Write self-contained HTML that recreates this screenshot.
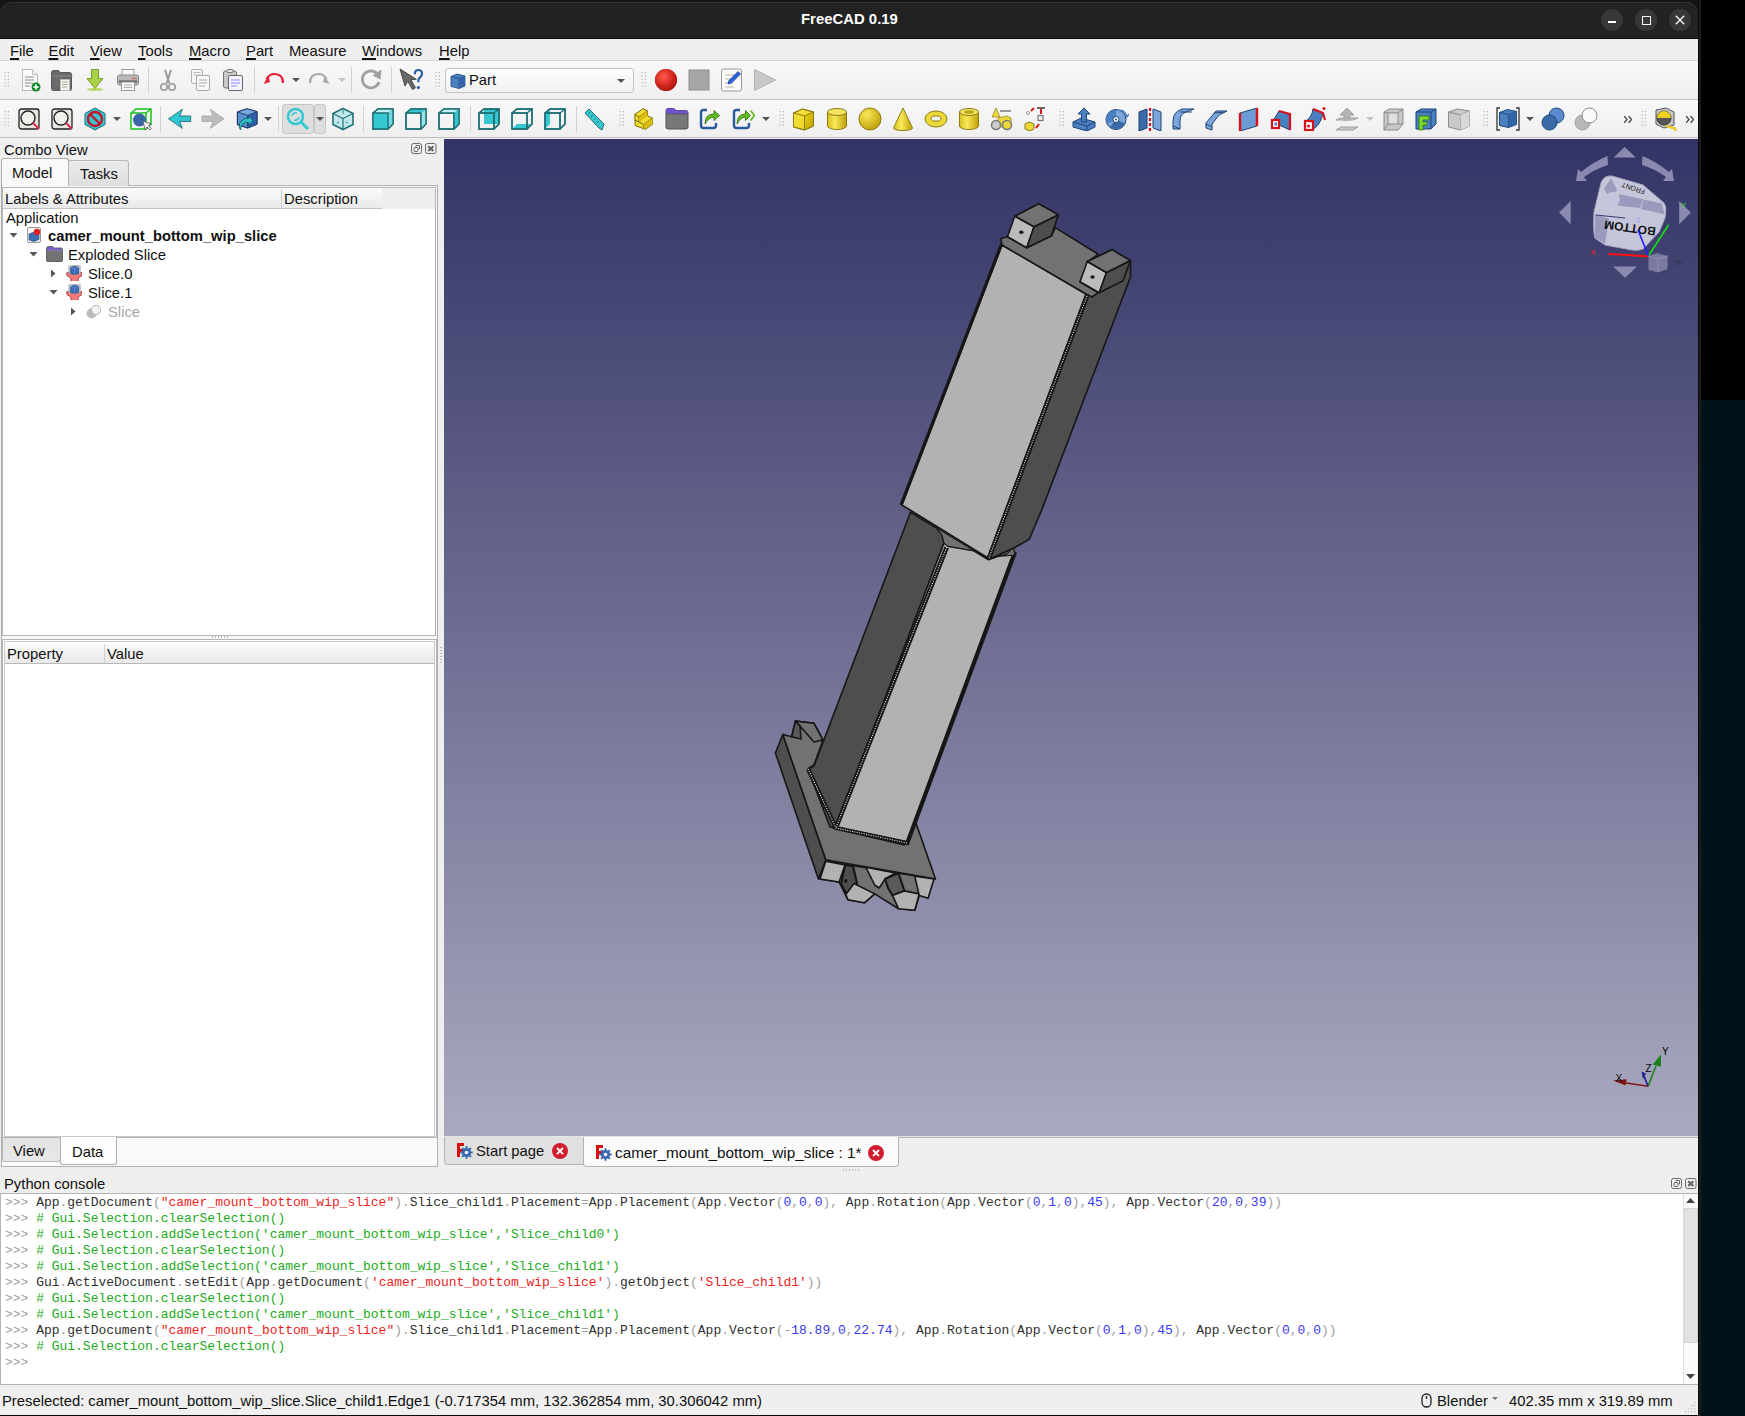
<!DOCTYPE html>
<html><head><meta charset="utf-8">
<style>
*{box-sizing:border-box;margin:0;padding:0}
html,body{width:1745px;height:1416px;overflow:hidden;background:#000;font-family:"Liberation Sans",sans-serif;color:#101010}
.a{position:absolute}
.t{position:absolute;white-space:pre;font-size:14.8px;line-height:18px}
#win{position:absolute;left:0;top:0;width:1698px;height:1416px;background:#efefef;overflow:hidden}
#rb{position:absolute;left:1698px;top:0;width:3px;height:1416px;background:#1c1c1a;border-left:1px solid #0a0a0a}
#rdark{position:absolute;left:1701px;top:400px;width:44px;height:1016px;background:#00131b}
#title{position:absolute;left:0;top:0;width:1698px;height:39px;background:#141414;border-bottom:1px solid #0c0c0c}
#title:before{content:"";position:absolute;left:0;top:2px;width:1698px;height:36px;background:#222;border-radius:12px 12px 0 0;box-shadow:inset 0 1px 0 #333}
.wbtn{position:absolute;top:9px;width:22px;height:22px;border-radius:11px;background:#373737}
#menu{position:absolute;left:0;top:39px;width:1698px;height:22px;background:#efefef;border-bottom:1px solid #d6d6d6}
.tb{position:absolute;left:0;width:1698px;background:linear-gradient(#f8f8f8,#efefef);border-bottom:1px solid #c2c2c2}
.sep{position:absolute;width:1px;height:26px;background:#d2d2d2}
.grip{position:absolute;width:6px;height:19px;background-image:radial-gradient(circle at 1.5px 1.5px,#bcbcbc .9px,transparent 1.1px);background-size:3px 4px}
.frame{position:absolute;border:1px solid #b4b4b4}
.hdr{position:absolute;background:linear-gradient(#fbfbfb,#e9e9e9);border-bottom:1px solid #c4c4c4}
.mono{position:absolute;left:5px;white-space:pre;font-family:"Liberation Mono",monospace;font-size:12.97px;line-height:16px;color:#303030}
.op{color:#a0a0a4}.st{color:#ee1c1c}.cm{color:#22aa22}.nu{color:#3838f0}
</style></head><body>
<svg width="0" height="0" style="position:absolute"><defs>
<radialGradient id="gRec" cx=".4" cy=".35" r=".65"><stop offset="0" stop-color="#ff5a50"/><stop offset=".6" stop-color="#d82a20"/><stop offset="1" stop-color="#a81810"/></radialGradient>
<linearGradient id="gYh" x1="0" x2="1"><stop offset="0" stop-color="#d8c020"/><stop offset=".4" stop-color="#f8e858"/><stop offset="1" stop-color="#c0a008"/></linearGradient>
<radialGradient id="gYs" cx=".35" cy=".3" r=".75"><stop offset="0" stop-color="#f8e858"/><stop offset="1" stop-color="#c0a008"/></radialGradient>
<linearGradient id="gYf" x1="0" y1="0" x2="1" y2="1"><stop offset="0" stop-color="#f8e440"/><stop offset="1" stop-color="#e8d020"/></linearGradient>
<linearGradient id="gYr" x1="0" y1="0" x2="1" y2="1"><stop offset="0" stop-color="#f0d810"/><stop offset="1" stop-color="#b89a00"/></linearGradient>
</defs></svg>
<div id="win">
 <div id="title">
  <div class="t" style="left:801px;top:10px;font-weight:bold;color:#fff;font-size:14.9px">FreeCAD 0.19</div>
  <div class="wbtn" style="left:1601px"><div class="a" style="left:7px;top:12px;width:8px;height:1.6px;background:#fff"></div></div>
  <div class="wbtn" style="left:1635px"><div class="a" style="left:7px;top:7px;width:8.5px;height:8.5px;border:1.4px solid #fff"></div></div>
  <div class="wbtn" style="left:1669px"><svg class="a" style="left:0;top:0" width="22" height="22"><path d="M6.8 6.8L15.2 15.2M15.2 6.8L6.8 15.2" stroke="#fff" stroke-width="1.3"/></svg></div>
 </div>
 <div id="menu">
  <div class="t" style="left:10px;top:3px"><u style="text-decoration-thickness:2px;text-underline-offset:2px">F</u>ile</div>
  <div class="t" style="left:48.5px;top:3px"><u style="text-decoration-thickness:2px;text-underline-offset:2px">E</u>dit</div>
  <div class="t" style="left:90px;top:3px"><u style="text-decoration-thickness:2px;text-underline-offset:2px">V</u>iew</div>
  <div class="t" style="left:138px;top:3px"><u style="text-decoration-thickness:2px;text-underline-offset:2px">T</u>ools</div>
  <div class="t" style="left:189px;top:3px"><u style="text-decoration-thickness:2px;text-underline-offset:2px">M</u>acro</div>
  <div class="t" style="left:246px;top:3px"><u style="text-decoration-thickness:2px;text-underline-offset:2px">P</u>art</div>
  <div class="t" style="left:289px;top:3px">Measure</div>
  <div class="t" style="left:362px;top:3px"><u style="text-decoration-thickness:2px;text-underline-offset:2px">W</u>indows</div>
  <div class="t" style="left:439px;top:3px"><u style="text-decoration-thickness:2px;text-underline-offset:2px">H</u>elp</div>
 </div>
 <div class="tb" id="tb1" style="top:61px;height:39px"></div>
 <div class="tb" id="tb2" style="top:100px;height:38px"></div>
<svg class="a" style="left:4px;top:70px" width="6" height="19" fill="#b4b4b4"><rect x="0.5" y="2.0" width="1.2" height="1.2"/><rect x="3.8" y="2.0" width="1.2" height="1.2"/><rect x="0.5" y="5.4" width="1.2" height="1.2"/><rect x="3.8" y="5.4" width="1.2" height="1.2"/><rect x="0.5" y="8.8" width="1.2" height="1.2"/><rect x="3.8" y="8.8" width="1.2" height="1.2"/><rect x="0.5" y="12.2" width="1.2" height="1.2"/><rect x="3.8" y="12.2" width="1.2" height="1.2"/><rect x="0.5" y="15.6" width="1.2" height="1.2"/><rect x="3.8" y="15.6" width="1.2" height="1.2"/></svg>
<svg class="a" style="left:18px;top:68px" width="24" height="24" viewBox="0 0 24 24"><path d="M4.5 1.5h10l5 5v16h-15z" fill="#fafafa" stroke="#b8b8b8"/><path d="M14.5 1.5v5h5" fill="#eee" stroke="#c0c0c0"/>
<path d="M7 9h9M7 12h9M7 15h8M7 18h5" stroke="#888" stroke-width="1"/>
<circle cx="18" cy="19" r="4.5" fill="#0d8a25"/><path d="M18 16.3v5.4M15.3 19h5.4" stroke="#fff" stroke-width="1.6"/></svg>
<svg class="a" style="left:50px;top:68px" width="24" height="24" viewBox="0 0 24 24"><path d="M1.5 4.5q0-2 2-2h5l2 2h9q2 0 2 2v14q0 2-2 2h-16q-2 0-2-2z" fill="#6a6a6a" stroke="#555"/><path d="M1.5 8h21" stroke="#888"/>
<path d="M10.5 11.5h9v11h-9z" fill="#f4f4f2" stroke="#bbb"/><path d="M12 14h6M12 16.5h6M12 19h5" stroke="#b0a890"/></svg>
<svg class="a" style="left:83px;top:68px" width="24" height="24" viewBox="0 0 24 24"><ellipse cx="12" cy="21.5" rx="8" ry="1.6" fill="#b8dc70"/><path d="M8.5 1.5h7v9h4.5l-8 10-8-10h4.5z" fill="#a8d048" stroke="#7a9a30"/></svg>
<svg class="a" style="left:116px;top:68px" width="24" height="24" viewBox="0 0 24 24"><rect x="6" y="1.5" width="12" height="6" fill="#fafafa" stroke="#999"/><rect x="1.5" y="7" width="21" height="10" rx="2" fill="#b8b8b8" stroke="#8a8a8a"/>
<rect x="3" y="12.5" width="18" height="2" fill="#555"/><rect x="5.5" y="14" width="13" height="8.5" fill="#fafafa" stroke="#999"/><path d="M8 17h8M8 19.5h8" stroke="#aaa"/>
<circle cx="16.5" cy="10.5" r=".7" fill="#e33"/><circle cx="18.3" cy="10.5" r=".7" fill="#e33"/><circle cx="20" cy="10.5" r=".7" fill="#3a3"/></svg>
<svg class="a" style="left:156px;top:68px" width="24" height="24" viewBox="0 0 24 24"><path d="M9 2l4.5 13.5M15 2l-4.5 13.5" stroke="#9a9a9a" stroke-width="2"/><circle cx="8" cy="19" r="3.2" fill="none" stroke="#9a9a9a" stroke-width="1.6"/><circle cx="16" cy="19" r="3.2" fill="none" stroke="#9a9a9a" stroke-width="1.6"/></svg>
<svg class="a" style="left:189px;top:68px" width="24" height="24" viewBox="0 0 24 24"><rect x="2.5" y="1.5" width="11" height="14" rx="1.5" fill="#f6f6f6" stroke="#b0b0b0"/><path d="M4.5 4.5h7M4.5 7h7" stroke="#bbb"/>
<rect x="7.5" y="7.5" width="13" height="15" rx="1.5" fill="#f8f8f8" stroke="#a8a8a8"/><path d="M10 12h8M10 15h8M10 18h6" stroke="#aaa"/></svg>
<svg class="a" style="left:222px;top:68px" width="24" height="24" viewBox="0 0 24 24"><rect x="1.5" y="3" width="13" height="17" rx="2" fill="#c8c8c8" stroke="#707070"/><rect x="5" y="1.5" width="6" height="3" rx="1" fill="#e8e8e8" stroke="#777"/>
<rect x="6.5" y="7.5" width="14" height="15" rx="1.5" fill="#f4f4ff" stroke="#666"/><path d="M9 12h9M9 15h9M9 18h6" stroke="#8888ff" stroke-width="1.2"/></svg>
<svg class="a" style="left:262px;top:68px" width="24" height="24" viewBox="0 0 24 24"><path d="M21 15q0-9-8.5-9q-5.5 0-8 5" fill="none" stroke="#ee1c3a" stroke-width="2.2"/><path d="M1.5 16l5-8 1.5 6z" fill="#ee1c3a"/></svg>
<svg class="a" style="left:306.7px;top:68px" width="24" height="24" viewBox="0 0 24 24"><path d="M3 15q0-9 8.5-9q5.5 0 8 5" fill="none" stroke="#a8a8a8" stroke-width="2.2"/><path d="M22.5 16l-5-8-1.5 6z" fill="#a8a8a8"/></svg>
<svg class="a" style="left:359px;top:68px" width="24" height="24" viewBox="0 0 24 24"><path d="M18.5 6a8.5 8.5 0 1 0 1.5 8" fill="none" stroke="#a0a0a0" stroke-width="2.8"/><path d="M22.5 1.5l-1 10-8-4z" fill="#a0a0a0"/></svg>
<svg class="a" style="left:399px;top:68px" width="24" height="24" viewBox="0 0 24 24"><path d="M1 1l5 17 2.8-4.8 4.7 8.3 3-1.7-4.7-8.3 5.5-.2z" fill="#6a6a6a" stroke="#3c3c3c" stroke-width=".9" stroke-linejoin="round"/><path d="M15.8 6.2q0-4.2 3.6-4.2t3.6 3.8q0 2.4-2.6 4.2-1 .7-1 2.6v1.6" fill="none" stroke="#2a5aa6" stroke-width="2.2"/><circle cx="19.4" cy="19.5" r="1.6" fill="#2a5aa6"/></svg>
<svg class="a" style="left:292px;top:78px" width="8" height="4"><path d="M0 0h8l-4 4z" fill="#555"/></svg>
<svg class="a" style="left:337.5px;top:78px" width="8" height="4"><path d="M0 0h8l-4 4z" fill="#c4c4c4"/></svg>
<div class="sep" style="left:148px;top:67px"></div>
<div class="sep" style="left:254px;top:67px"></div>
<div class="sep" style="left:351px;top:67px"></div>
<div class="sep" style="left:391px;top:67px"></div>
<svg class="a" style="left:435px;top:70px" width="6" height="19" fill="#b4b4b4"><rect x="0.5" y="2.0" width="1.2" height="1.2"/><rect x="3.8" y="2.0" width="1.2" height="1.2"/><rect x="0.5" y="5.4" width="1.2" height="1.2"/><rect x="3.8" y="5.4" width="1.2" height="1.2"/><rect x="0.5" y="8.8" width="1.2" height="1.2"/><rect x="3.8" y="8.8" width="1.2" height="1.2"/><rect x="0.5" y="12.2" width="1.2" height="1.2"/><rect x="3.8" y="12.2" width="1.2" height="1.2"/><rect x="0.5" y="15.6" width="1.2" height="1.2"/><rect x="3.8" y="15.6" width="1.2" height="1.2"/></svg>
<svg class="a" style="left:641px;top:70px" width="6" height="19" fill="#b4b4b4"><rect x="0.5" y="2.0" width="1.2" height="1.2"/><rect x="3.8" y="2.0" width="1.2" height="1.2"/><rect x="0.5" y="5.4" width="1.2" height="1.2"/><rect x="3.8" y="5.4" width="1.2" height="1.2"/><rect x="0.5" y="8.8" width="1.2" height="1.2"/><rect x="3.8" y="8.8" width="1.2" height="1.2"/><rect x="0.5" y="12.2" width="1.2" height="1.2"/><rect x="3.8" y="12.2" width="1.2" height="1.2"/><rect x="0.5" y="15.6" width="1.2" height="1.2"/><rect x="3.8" y="15.6" width="1.2" height="1.2"/></svg>
<svg class="a" style="left:654px;top:68px" width="24" height="24" viewBox="0 0 24 24"><circle cx="12" cy="12" r="11" fill="#d8262b"/><circle cx="12" cy="12" r="11" fill="url(#gRec)"/></svg>
<svg class="a" style="left:687px;top:68px" width="24" height="24" viewBox="0 0 24 24"><rect x="2" y="2" width="20" height="20" fill="#a6a6a6" stroke="#8c8c8c"/></svg>
<svg class="a" style="left:720px;top:68px" width="24" height="24" viewBox="0 0 24 24"><rect x="1.5" y="1" width="20" height="22" rx="2" fill="#fafafa" stroke="#9a9a9a"/><path d="M5 7h9M5 11h6M5 15h7M5 19h9" stroke="#c0b8a0"/><path d="M18 3.5l2.5 2.5-9 9-3.5 1 1-3.5z" fill="#2a64d8" stroke="#1a3f90" stroke-width=".8"/></svg>
<svg class="a" style="left:753px;top:68px" width="24" height="24" viewBox="0 0 24 24"><path d="M1.5 1.5l21 10.5-21 10.5z" fill="#c8c8c8" stroke="#b0b0b0"/></svg>
<div class="a" style="left:444.5px;top:68px;width:189px;height:25px;border:1px solid #c4c4c4;border-radius:3px;background:linear-gradient(#fdfdfd,#f0f0f0)"></div>
<svg class="a" style="left:450px;top:73px" width="16" height="16" viewBox="0 0 16 16"><path d="M1 3.5l6-2.5 8 2v10l-6 2.5-8-2z" fill="#4a7fc0" stroke="#24497e" stroke-width=".8"/><path d="M1 3.5l8 2 6-2.5M9 5.5v10" fill="none" stroke="#24497e" stroke-width=".8"/><path d="M9 5.5l6-2.5v10l-6 2.5z" fill="#3264a6"/></svg>
<div class="t" style="left:469px;top:71px">Part</div><svg class="a" style="left:617px;top:79px" width="8" height="4"><path d="M0 0h8l-4 4z" fill="#555"/></svg>
<svg class="a" style="left:4px;top:109px" width="6" height="19" fill="#b4b4b4"><rect x="0.5" y="2.0" width="1.2" height="1.2"/><rect x="3.8" y="2.0" width="1.2" height="1.2"/><rect x="0.5" y="5.4" width="1.2" height="1.2"/><rect x="3.8" y="5.4" width="1.2" height="1.2"/><rect x="0.5" y="8.8" width="1.2" height="1.2"/><rect x="3.8" y="8.8" width="1.2" height="1.2"/><rect x="0.5" y="12.2" width="1.2" height="1.2"/><rect x="3.8" y="12.2" width="1.2" height="1.2"/><rect x="0.5" y="15.6" width="1.2" height="1.2"/><rect x="3.8" y="15.6" width="1.2" height="1.2"/></svg>
<svg class="a" style="left:83px;top:107px" width="24" height="24" viewBox="0 0 24 24"><path d="M12 1l10 5.5v11L12 23 2 17.5v-11z" fill="#35c8d0" stroke="#1e6f74"/><circle cx="12" cy="12" r="7" fill="none" stroke="#c8102a" stroke-width="2.4"/><path d="M7 7l10 10" stroke="#c8102a" stroke-width="2.4"/></svg>
<svg class="a" style="left:128.6px;top:107px" width="24" height="24" viewBox="0 0 24 24"><path d="M2 6l5-4h15v15l-5 5H2z" fill="none" stroke="#18c018" stroke-width="1.5"/><path d="M2 6h15v16M17 6l5-4" stroke="#18c018" stroke-width="1.5" fill="none"/><circle cx="10.5" cy="13" r="6.5" fill="#3a64a8"/><path d="M14 14l2 9 2-3 3 3 1.5-1.5-3-3 3-1.5z" fill="#eee" stroke="#555" stroke-width=".8"/></svg>
<svg class="a" style="left:168.3px;top:107px" width="24" height="24" viewBox="0 0 24 24"><path d="M0.6 11.8L14.4 2.2 11.7 9H22.7V14.5H11.7L14.4 21.4Z" fill="#32c6d0" stroke="#14626a" stroke-width=".8" stroke-linejoin="round"/></svg>
<svg class="a" style="left:201px;top:107px" width="24" height="24" viewBox="0 0 24 24"><path d="M23 11.8L9.2 2.2 12 9H1V14.5H12L9.2 21.4Z" fill="#bcbcbc" stroke="#a4a4a4" stroke-width=".8" stroke-linejoin="round"/></svg>
<svg class="a" style="left:234px;top:107px" width="24" height="24" viewBox="0 0 24 24"><path d="M3.4 5l9.6-3.2 10 2.8v12.6l-9.4 3.8-10.2-3.4z" fill="#5a8fd0" stroke="#1e3a6a"/><path d="M13.6 8.4l9.4-3.8v12.6l-9.4 3.8z" fill="#2f5fa8"/><path d="M3.4 5l9.6-3.2 10 2.8-9.4 3.8z" fill="#7aa8e0"/><path d="M3.4 5l10.2 3.4 9.4-3.8M13.6 8.4v12.2" fill="none" stroke="#1e3a6a" stroke-width=".9"/><path d="M3.4 5l9.6-3.2 10 2.8v12.6l-9.4 3.8-10.2-3.4z" fill="none" stroke="#1e3a6a" stroke-width="1"/><path d="M6.5 23q-3-5 1-9t7-2.5V9l4.5 4.5-4.5 4.5v-2.5q-3-1-5.5 1.5t-2.5 6z" fill="#30c0c8" stroke="#0a5a60" stroke-width=".8"/></svg>
<svg class="a" style="left:331px;top:107px" width="24" height="24" viewBox="0 0 24 24"><path d="M12 1.5l10 5v11l-10 5-10-5v-11z" fill="none" stroke="#1e6f74" stroke-width="1.6"/><path d="M2 6.5l10 5 10-5M12 11.5v11" fill="none" stroke="#1e6f74" stroke-width="1.3"/><path d="M12 3v4M6 16l2-1M17 16l-2-1" stroke="#1e6f74"/>
<path d="M3 7l9 4.5 9-4.5-9-4.5z" fill="#35c8d0" opacity=".25"/><path d="M3 7.5l8.5 4.5v10L3 17.5z" fill="#35c8d0" opacity=".25"/><path d="M21 7.5l-8.5 4.5v10l8.5-4.5z" fill="#35c8d0" opacity=".25"/></svg>
<svg class="a" style="left:371.3px;top:107px" width="24" height="24" viewBox="0 0 24 24"><path d="M2 6l5-4h15v15l-5 5H2z" fill="#fff" fill-opacity="0" stroke="#1e6f74" stroke-width="1.4"/>
<path d="M2 6h15v16" fill="none" stroke="#1e6f74" stroke-width="1.4"/><path d="M17 6l5-4" stroke="#1e6f74" stroke-width="1.4"/>
<path d="M2 6h15v16H2z" fill="#35c8d0"/><path d="M2 6l5-4h15l-5 4z" fill="#bff0f2"/><path d="M17 6l5-4v15l-5 5z" fill="#6ad8de"/>
<path d="M2 6h15v16H2zM2 6l5-4h15v15l-5 5" fill="none" stroke="#1e6f74" stroke-width="1.4"/></svg>
<svg class="a" style="left:404px;top:107px" width="24" height="24" viewBox="0 0 24 24"><path d="M2 6l5-4h15v15l-5 5H2z" fill="#fff" fill-opacity="0" stroke="#1e6f74" stroke-width="1.4"/>
<path d="M2 6h15v16" fill="none" stroke="#1e6f74" stroke-width="1.4"/><path d="M17 6l5-4" stroke="#1e6f74" stroke-width="1.4"/>
<path d="M2 6h15v16H2z" fill="none"/><path d="M2 6l5-4h15l-5 4z" fill="#35c8d0"/><path d="M17 6l5-4v15l-5 5z" fill="#9ae4e8"/>
<path d="M2 6h15v16H2zM2 6l5-4h15v15l-5 5" fill="none" stroke="#1e6f74" stroke-width="1.4"/></svg>
<svg class="a" style="left:436.5px;top:107px" width="24" height="24" viewBox="0 0 24 24"><path d="M2 6l5-4h15v15l-5 5H2z" fill="#fff" fill-opacity="0" stroke="#1e6f74" stroke-width="1.4"/>
<path d="M2 6h15v16" fill="none" stroke="#1e6f74" stroke-width="1.4"/><path d="M17 6l5-4" stroke="#1e6f74" stroke-width="1.4"/>
<path d="M2 6h15v16H2z" fill="none"/><path d="M2 6l5-4h15l-5 4z" fill="#bff0f2"/><path d="M17 6l5-4v15l-5 5z" fill="#35c8d0"/>
<path d="M2 6h15v16H2zM2 6l5-4h15v15l-5 5" fill="none" stroke="#1e6f74" stroke-width="1.4"/></svg>
<svg class="a" style="left:477px;top:107px" width="24" height="24" viewBox="0 0 24 24"><path d="M7 2h15v15H7z" fill="#35c8d0"/><path d="M2 6l5-4h15v15l-5 5H2z" fill="#fff" fill-opacity="0" stroke="#1e6f74" stroke-width="1.4"/>
<path d="M2 6h15v16" fill="none" stroke="#1e6f74" stroke-width="1.4"/><path d="M17 6l5-4" stroke="#1e6f74" stroke-width="1.4"/>
<path d="M2 6h15v16H2z" fill="none"/><path d="M2 6l5-4h15l-5 4z" fill="none"/><path d="M17 6l5-4v15l-5 5z" fill="none"/>
<path d="M2 6h15v16H2zM2 6l5-4h15v15l-5 5" fill="none" stroke="#1e6f74" stroke-width="1.4"/></svg>
<svg class="a" style="left:510px;top:107px" width="24" height="24" viewBox="0 0 24 24"><path d="M2 22l5-5h15l-5 5z" fill="#35c8d0"/><path d="M2 6l5-4h15v15l-5 5H2z" fill="#fff" fill-opacity="0" stroke="#1e6f74" stroke-width="1.4"/>
<path d="M2 6h15v16" fill="none" stroke="#1e6f74" stroke-width="1.4"/><path d="M17 6l5-4" stroke="#1e6f74" stroke-width="1.4"/>
<path d="M2 6h15v16H2z" fill="none"/><path d="M2 6l5-4h15l-5 4z" fill="none"/><path d="M17 6l5-4v15l-5 5z" fill="none"/>
<path d="M2 6h15v16H2zM2 6l5-4h15v15l-5 5" fill="none" stroke="#1e6f74" stroke-width="1.4"/></svg>
<svg class="a" style="left:542.7px;top:107px" width="24" height="24" viewBox="0 0 24 24"><path d="M2 6l5-4v15l-5 5z" fill="#35c8d0"/><path d="M2 6l5-4h15v15l-5 5H2z" fill="#fff" fill-opacity="0" stroke="#1e6f74" stroke-width="1.4"/>
<path d="M2 6h15v16" fill="none" stroke="#1e6f74" stroke-width="1.4"/><path d="M17 6l5-4" stroke="#1e6f74" stroke-width="1.4"/>
<path d="M2 6h15v16H2z" fill="none"/><path d="M2 6l5-4h15l-5 4z" fill="none"/><path d="M17 6l5-4v15l-5 5z" fill="none"/>
<path d="M2 6h15v16H2zM2 6l5-4h15v15l-5 5" fill="none" stroke="#1e6f74" stroke-width="1.4"/></svg>
<svg class="a" style="left:582px;top:107px" width="24" height="24" viewBox="0 0 24 24"><path d="M3 6l4-4 15 15-2 6-3-2z" fill="#35c8d0" stroke="#1e6f74"/><path d="M8 5l-1.5 1.5M11 8l-2 2M14 11l-1.5 1.5M17 14l-2 2" stroke="#1e6f74"/></svg>
<svg class="a" style="left:632px;top:107px" width="24" height="24" viewBox="0 0 24 24"><path d="M2.8 7.4L11 1.5 15.5 4v4.9l4.9 2.3.3 5.9-7.4 5.2-10.1-3.7z" fill="#f0dc30" stroke="#6a5a00" stroke-width=".9" stroke-linejoin="round"/><path d="M2.8 7.4L7 10l8.5-6M7 10v5M3.2 13l3.8 2 4.5 2.5 8.9-6.3M11.5 17.5v4.8" fill="none" stroke="#6a5a00" stroke-width=".9"/><path d="M7 10l8.5-6v4.9L7 15z" fill="#d8bc10"/><path d="M11.5 17.5l8.9-6.3.3 5.9-9.2 5.2z" fill="#d8bc10"/></svg>
<svg class="a" style="left:664.5px;top:107px" width="24" height="24" viewBox="0 0 24 24"><path d="M1 3.5q0-2 2-2h6l2 2h10q2 0 2 2v14.5q0 2-2 2H3q-2 0-2-2z" fill="#787878" stroke="#505050"/><path d="M1 3.5q0-2 2-2h6l2 2h10q2 0 2 2v1.5H1z" fill="#7050d0"/><path d="M1 7h22" stroke="#5a5a5a"/></svg>
<svg class="a" style="left:698px;top:107px" width="24" height="24" viewBox="0 0 24 24"><path d="M9 3H5.5Q3 3 3 5.5v13Q3 21 5.5 21h10q2.5 0 2.5-2.5V16" fill="none" stroke="#2a5a9a" stroke-width="2.4"/><path d="M7 17q0-10 9-10V3.5l5.5 5-5.5 5V10q-5 0-9 7z" fill="#60c020" stroke="#2a6a10" stroke-width=".8"/></svg>
<svg class="a" style="left:731px;top:107px" width="24" height="24" viewBox="0 0 24 24"><path d="M9 3H5.5Q3 3 3 5.5v13Q3 21 5.5 21h10q2.5 0 2.5-2.5V16" fill="none" stroke="#2a5a9a" stroke-width="2.4"/><path d="M6 17q0-10 8.5-10V3.5l5 5-5 5V10q-4.5 0-8.5 7z" fill="#60c020" stroke="#2a6a10" stroke-width=".8"/><path d="M19.5 3.5l4 5-4 5" fill="none" stroke="#60c020" stroke-width="1.8"/></svg>
<svg class="a" style="left:791.7px;top:107px" width="24" height="24" viewBox="0 0 24 24"><path d="M1.5 6l9-4 11 3v14l-9 4-11-3z" fill="url(#gYf)" stroke="#8c7c12"/><path d="M12.5 9l9-4v14l-9 4z" fill="url(#gYr)"/><path d="M1.5 6l11 3 9-4M12.5 9v14" fill="none" stroke="#8c7c12"/><path d="M1.5 6l9-4 11 3v14l-9 4-11-3z" fill="none" stroke="#8c7c12"/></svg>
<svg class="a" style="left:824.5px;top:107px" width="24" height="24" viewBox="0 0 24 24"><path d="M2.5 5v14a9.5 3.5 0 0 0 19 0V5" fill="url(#gYh)" stroke="#8c7c12"/><ellipse cx="12" cy="5" rx="9.5" ry="3.5" fill="#f4e460" stroke="#8c7c12"/></svg>
<svg class="a" style="left:858px;top:107px" width="24" height="24" viewBox="0 0 24 24"><circle cx="12" cy="12" r="11" fill="url(#gYs)" stroke="#8c7c12"/></svg>
<svg class="a" style="left:890.7px;top:107px" width="24" height="24" viewBox="0 0 24 24"><path d="M12 1l9.5 20a9.5 2.5 0 0 1-19 0z" fill="url(#gYh)" stroke="#8c7c12"/></svg>
<svg class="a" style="left:924px;top:107px" width="24" height="24" viewBox="0 0 24 24"><ellipse cx="12" cy="12" rx="11" ry="8" fill="#ecd83a" stroke="#8c7c12"/><ellipse cx="12" cy="11.5" rx="5" ry="2.6" fill="#f4f4f4" stroke="#8c7c12"/></svg>
<svg class="a" style="left:956.5px;top:107px" width="24" height="24" viewBox="0 0 24 24"><path d="M2.5 5v14a9.5 3.5 0 0 0 19 0V5" fill="url(#gYh)" stroke="#8c7c12"/><ellipse cx="12" cy="5" rx="9.5" ry="3.5" fill="#f4e460" stroke="#8c7c12"/><ellipse cx="12" cy="5" rx="5" ry="1.8" fill="#b8a418"/></svg>
<svg class="a" style="left:989.7px;top:107px" width="24" height="24" viewBox="0 0 24 24"><path d="M6 1l4 9H2z" fill="#ecd83a" stroke="#8c7c12" stroke-width=".7"/><path d="M10 4h11" stroke="#999" stroke-width="2"/><path d="M8 11l9-2 4 2v9H8z" fill="#ecd83a" stroke="#8c7c12" stroke-width=".7"/><circle cx="6" cy="18" r="4.5" fill="#ccc" stroke="#777" stroke-width="1.5"/><circle cx="17" cy="18" r="4.5" fill="#ecd83a" stroke="#777" stroke-width="1.5"/></svg>
<svg class="a" style="left:1023px;top:107px" width="24" height="24" viewBox="0 0 24 24"><path d="M2 17l4-2 5 2v5l-4 2-5-2z" fill="#ecd83a" stroke="#8c7c12"/><path d="M3 6l2-2 2 2-2 2z" fill="#ddd" stroke="#888" stroke-width=".7"/><path d="M8 4l3-3" stroke="#d81818" stroke-width="2"/><path d="M14 1h8" stroke="#666" stroke-width="2"/><path d="M18 2v5" stroke="#d81818" stroke-width="2"/><rect x="15" y="8.5" width="5" height="5" fill="#eee" stroke="#777" stroke-width="1.2"/><path d="M16 17l-3 4" stroke="#d81818" stroke-width="2"/></svg>
<svg class="a" style="left:1071.5px;top:107px" width="24" height="24" viewBox="0 0 24 24"><path d="M1 15l8-4 14 4v5l-8 4-14-4z" fill="#4a7fc0" stroke="#1e4478"/><path d="M1 15l14 4 8-4M15 19v5" fill="none" stroke="#1e4478"/><path d="M12 1l6 6h-3.5v8h-5V7H6z" fill="#4a7fc0" stroke="#1e4478"/></svg>
<svg class="a" style="left:1105px;top:107px" width="24" height="24" viewBox="0 0 24 24"><circle cx="11" cy="12.5" r="10" fill="#7aa6dc" stroke="#1e4478"/><path d="M11 12.5V2.5A10 10 0 0 0 2 17z" fill="#4a7fc0"/><path d="M11 12.5l9 4A10 10 0 0 1 5 20z" fill="#3a6aa8"/><circle cx="11" cy="12.5" r="3" fill="#fff" stroke="#1e4478"/><circle cx="11" cy="12.5" r="1" fill="#1e4478"/><path d="M16 3q5 2 6 7l2-3" fill="none" stroke="#4a7fc0" stroke-width="1.4"/></svg>
<svg class="a" style="left:1138px;top:107px" width="24" height="24" viewBox="0 0 24 24"><path d="M1 5l8-3v19l-8 3z" fill="#3a6aa8" stroke="#1e4478"/><path d="M23 5l-8-3v19l8 3z" fill="#7aa6dc" stroke="#1e4478"/><path d="M12 1v23" stroke="#d8101a" stroke-width="2.2" stroke-dasharray="3 2"/></svg>
<svg class="a" style="left:1170.5px;top:107px" width="24" height="24" viewBox="0 0 24 24"><path d="M2 22V14q0-9 9-12h12l-8 3q-6 2-6 9v8z" fill="#7aa6dc" stroke="#1e4478"/><path d="M2 19l7 3" stroke="#1e4478"/><path d="M9 5h12" stroke="#1e4478"/></svg>
<svg class="a" style="left:1203.7px;top:107px" width="24" height="24" viewBox="0 0 24 24"><path d="M2 21v-5l10-12h11l-8 4-7 9v6z" fill="#7aa6dc" stroke="#1e4478"/><path d="M2 17l6 3M10 6l11-1" stroke="#1e4478"/></svg>
<svg class="a" style="left:1237px;top:107px" width="24" height="24" viewBox="0 0 24 24"><path d="M3 6l17-5v18l-17 5z" fill="#6c9ad4" stroke="#1e4478"/><path d="M3 6v18M20 1v18" stroke="#d8101a" stroke-width="2.4"/></svg>
<svg class="a" style="left:1269.7px;top:107px" width="24" height="24" viewBox="0 0 24 24"><path d="M3 14l6-10 11 3v16l-11-5z" fill="#4a7fc0" stroke="#1e4478"/><path d="M9 4l11 3v16" fill="none" stroke="#d8101a" stroke-width="2.2"/><rect x="2" y="13" width="7" height="8" fill="#fff" stroke="#d8101a" stroke-width="2.2"/><rect x="4.5" y="15.5" width="2.5" height="3" fill="#4a7fc0"/></svg>
<svg class="a" style="left:1302.5px;top:107px" width="24" height="24" viewBox="0 0 24 24"><path d="M3 14q6-4 7-12l10 4q-2 10-8 15l-9 3z" fill="#4a7fc0" stroke="#1e4478"/><path d="M10 2l10 4 2 7" fill="none" stroke="#d8101a" stroke-width="2.2"/><rect x="2" y="14" width="8" height="9" fill="#fff" stroke="#d8101a" stroke-width="2.2"/><circle cx="5.5" cy="19" r="1.5" fill="#d8101a"/><circle cx="21" cy="1.5" r="1.5" fill="#d8101a"/></svg>
<svg class="a" style="left:1335.4px;top:107px" width="24" height="24" viewBox="0 0 24 24"><path d="M12 1l7 7h-4v5H9V8H5z" fill="#b4b4b4" stroke="#909090" stroke-width=".8"/><path d="M1 13l5-2h17l-5 2z" fill="#c4c4c4" stroke="#a0a0a0"/><path d="M1 23l5-3h17l-5 3z" fill="#c4c4c4" stroke="#a0a0a0"/></svg>
<svg class="a" style="left:1381px;top:107px" width="24" height="24" viewBox="0 0 24 24"><path d="M3 5l5-3h14v15l-5 6H3z" fill="#c8c8c8" stroke="#8a8a8a"/><path d="M7 6h10v11H7z" fill="#e0e0e0" stroke="#8a8a8a"/><path d="M3 5l4 1M17 6l5-4M7 17l-4 6M17 17l5 0" stroke="#8a8a8a"/></svg>
<svg class="a" style="left:1414.4px;top:107px" width="24" height="24" viewBox="0 0 24 24"><path d="M2 5l5-3h15v15l-5 5H2z" fill="#4a7fc0" stroke="#1e4478"/><path d="M2 5h15v17M17 5l5-3" fill="none" stroke="#1e4478"/><path d="M5 9h10v4H9v2h4v3H9v5H5z" fill="#7cd82a" stroke="#2f7a10" stroke-width=".8"/></svg>
<svg class="a" style="left:1446.8px;top:107px" width="24" height="24" viewBox="0 0 24 24"><path d="M1.5 5l9-3 12 2v15l-9 4-12-3z" fill="#c8c8c8" stroke="#8c8c8c"/><path d="M1.5 5l12 3 9-4M13.5 8v15" fill="none" stroke="#8c8c8c"/><path d="M13.5 8l9-4v15l-9 4z" fill="#d8d8d8"/></svg>
<svg class="a" style="left:1495.8px;top:107px" width="24" height="24" viewBox="0 0 24 24"><path d="M4 1H1v22h3M20 1h3v22h-3" fill="none" stroke="#333" stroke-width="1.3"/><path d="M3.5 5.5l8-3 9 2v13l-8 3-9-2z" fill="#4a7fc0" stroke="#1e4478"/><path d="M3.5 5.5l9 2 8-3M12.5 7.5v13" fill="none" stroke="#1e4478"/><path d="M12.5 7.5l8-3v13l-8 3z" fill="#3264a6"/></svg>
<svg class="a" style="left:1540.5px;top:107px" width="24" height="24" viewBox="0 0 24 24"><circle cx="15.5" cy="8.5" r="7.5" fill="#5a8ad0" stroke="#1e4478"/><circle cx="8.5" cy="15.5" r="7.5" fill="#3a6aa8" stroke="#1e4478"/></svg>
<svg class="a" style="left:1573.5px;top:107px" width="24" height="24" viewBox="0 0 24 24"><circle cx="8.5" cy="15.5" r="7.5" fill="#b8b8b8" stroke="#a0a0a0"/><circle cx="15.5" cy="8.5" r="7.5" fill="#fafafa" stroke="#888"/></svg>
<svg class="a" style="left:1652.5px;top:107px" width="24" height="24" viewBox="0 0 24 24"><path d="M3 3l10-2 8 4v13l-10 3-8-4z" fill="#c8c8c8" stroke="#555"/><circle cx="11" cy="11" r="7" fill="#555" stroke="#333"/><path d="M4 11a7 7 0 0 1 14 0z" fill="#f0d020"/><path d="M13 19l9 2.5 1 2.5" stroke="#e8c820" stroke-width="2.4" fill="none"/></svg>
<svg class="a" style="left:18px;top:108px" width="22" height="22" viewBox="0 0 22 22"><rect x="1" y="1" width="20" height="20" rx="2.5" fill="#e8e6e0" stroke="#222" stroke-width="1.3"/><circle cx="10" cy="10" r="7" fill="#f2f0ec" stroke="#222" stroke-width="1.4"/><path d="M15 15l6 6" stroke="#e0204a" stroke-width="1.8"/></svg>
<svg class="a" style="left:51px;top:108px" width="22" height="22" viewBox="0 0 22 22"><rect x="1" y="1" width="20" height="20" rx="2.5" fill="#e8e6e0" stroke="#222" stroke-width="1.3"/><circle cx="10" cy="10" r="7" fill="#f2f0ec" stroke="#222" stroke-width="1.4"/><path d="M15 15l6 6" stroke="#e0204a" stroke-width="1.8"/></svg>
<div class="a" style="left:282px;top:104px;width:32px;height:30px;border:1px solid #c6c6c6;border-radius:3px;background:#dedede"></div><div class="a" style="left:314px;top:104px;width:12px;height:30px;border:1px solid #c6c6c6;border-radius:3px;background:#dedede"></div>
<svg class="a" style="left:286px;top:107px" width="24" height="24" viewBox="0 0 24 24"><circle cx="9.5" cy="9.5" r="7.5" fill="none" stroke="#35c8d0" stroke-width="2.6"/><path d="M15 15l7 7" stroke="#35c8d0" stroke-width="3"/><path d="M6 9q1-4 5-3M13 10q-1 4-5 3" fill="none" stroke="#35c8d0" stroke-width="1.5"/></svg>
<svg class="a" style="left:113px;top:117px" width="8" height="4"><path d="M0 0h8l-4 4z" fill="#555"/></svg>
<svg class="a" style="left:263.5px;top:117px" width="8" height="4"><path d="M0 0h8l-4 4z" fill="#555"/></svg>
<svg class="a" style="left:316px;top:117px" width="8" height="4"><path d="M0 0h8l-4 4z" fill="#555"/></svg>
<svg class="a" style="left:761.5px;top:117px" width="8" height="4"><path d="M0 0h8l-4 4z" fill="#555"/></svg>
<svg class="a" style="left:1366px;top:117px" width="8" height="4"><path d="M0 0h8l-4 4z" fill="#c4c4c4"/></svg>
<svg class="a" style="left:1526px;top:117px" width="8" height="4"><path d="M0 0h8l-4 4z" fill="#555"/></svg>
<div class="sep" style="left:160px;top:106px"></div>
<div class="sep" style="left:278px;top:106px"></div>
<div class="sep" style="left:363px;top:106px"></div>
<div class="sep" style="left:469.5px;top:106px"></div>
<div class="sep" style="left:575.5px;top:106px"></div>
<svg class="a" style="left:619px;top:109px" width="6" height="19" fill="#b4b4b4"><rect x="0.5" y="2.0" width="1.2" height="1.2"/><rect x="3.8" y="2.0" width="1.2" height="1.2"/><rect x="0.5" y="5.4" width="1.2" height="1.2"/><rect x="3.8" y="5.4" width="1.2" height="1.2"/><rect x="0.5" y="8.8" width="1.2" height="1.2"/><rect x="3.8" y="8.8" width="1.2" height="1.2"/><rect x="0.5" y="12.2" width="1.2" height="1.2"/><rect x="3.8" y="12.2" width="1.2" height="1.2"/><rect x="0.5" y="15.6" width="1.2" height="1.2"/><rect x="3.8" y="15.6" width="1.2" height="1.2"/></svg>
<svg class="a" style="left:779px;top:109px" width="6" height="19" fill="#b4b4b4"><rect x="0.5" y="2.0" width="1.2" height="1.2"/><rect x="3.8" y="2.0" width="1.2" height="1.2"/><rect x="0.5" y="5.4" width="1.2" height="1.2"/><rect x="3.8" y="5.4" width="1.2" height="1.2"/><rect x="0.5" y="8.8" width="1.2" height="1.2"/><rect x="3.8" y="8.8" width="1.2" height="1.2"/><rect x="0.5" y="12.2" width="1.2" height="1.2"/><rect x="3.8" y="12.2" width="1.2" height="1.2"/><rect x="0.5" y="15.6" width="1.2" height="1.2"/><rect x="3.8" y="15.6" width="1.2" height="1.2"/></svg>
<svg class="a" style="left:1059px;top:109px" width="6" height="19" fill="#b4b4b4"><rect x="0.5" y="2.0" width="1.2" height="1.2"/><rect x="3.8" y="2.0" width="1.2" height="1.2"/><rect x="0.5" y="5.4" width="1.2" height="1.2"/><rect x="3.8" y="5.4" width="1.2" height="1.2"/><rect x="0.5" y="8.8" width="1.2" height="1.2"/><rect x="3.8" y="8.8" width="1.2" height="1.2"/><rect x="0.5" y="12.2" width="1.2" height="1.2"/><rect x="3.8" y="12.2" width="1.2" height="1.2"/><rect x="0.5" y="15.6" width="1.2" height="1.2"/><rect x="3.8" y="15.6" width="1.2" height="1.2"/></svg>
<svg class="a" style="left:1483px;top:109px" width="6" height="19" fill="#b4b4b4"><rect x="0.5" y="2.0" width="1.2" height="1.2"/><rect x="3.8" y="2.0" width="1.2" height="1.2"/><rect x="0.5" y="5.4" width="1.2" height="1.2"/><rect x="3.8" y="5.4" width="1.2" height="1.2"/><rect x="0.5" y="8.8" width="1.2" height="1.2"/><rect x="3.8" y="8.8" width="1.2" height="1.2"/><rect x="0.5" y="12.2" width="1.2" height="1.2"/><rect x="3.8" y="12.2" width="1.2" height="1.2"/><rect x="0.5" y="15.6" width="1.2" height="1.2"/><rect x="3.8" y="15.6" width="1.2" height="1.2"/></svg>
<svg class="a" style="left:1641px;top:109px" width="6" height="19" fill="#b4b4b4"><rect x="0.5" y="2.0" width="1.2" height="1.2"/><rect x="3.8" y="2.0" width="1.2" height="1.2"/><rect x="0.5" y="5.4" width="1.2" height="1.2"/><rect x="3.8" y="5.4" width="1.2" height="1.2"/><rect x="0.5" y="8.8" width="1.2" height="1.2"/><rect x="3.8" y="8.8" width="1.2" height="1.2"/><rect x="0.5" y="12.2" width="1.2" height="1.2"/><rect x="3.8" y="12.2" width="1.2" height="1.2"/><rect x="0.5" y="15.6" width="1.2" height="1.2"/><rect x="3.8" y="15.6" width="1.2" height="1.2"/></svg>
<svg class="a" style="left:1624px;top:116px" width="8" height="7"><path d="M0 0l3 3.5L0 7M4.5 0l3 3.5-3 3.5" fill="none" stroke="#444" stroke-width="1.3"/></svg>
<svg class="a" style="left:1686px;top:116px" width="8" height="7"><path d="M0 0l3 3.5L0 7M4.5 0l3 3.5-3 3.5" fill="none" stroke="#444" stroke-width="1.3"/></svg>
<div class="t" style="left:4px;top:141px">Combo View</div>
<svg class="a" style="left:411px;top:143px" width="27" height="12" viewBox="0 0 27 12">
<rect x=".5" y=".5" width="10" height="10" rx="2" fill="none" stroke="#6e6a66"/><rect x="3" y="4.5" width="4" height="4" rx="1" fill="none" stroke="#6e6a66"/><path d="M5 3.5V2.5h3.5v3.5H7.5" fill="none" stroke="#6e6a66"/>
<rect x="14.5" y=".5" width="10.5" height="10" rx="2" fill="none" stroke="#6e6a66"/><path d="M17.2 3.2l5.2 4.8M22.4 3.2L17.2 8" stroke="#666" stroke-width="2.2"/></svg>
<div class="a" style="left:1px;top:185px;width:437px;height:982px;border:1px solid #b0b0b0;background:#f9f9f9"></div>
<div class="a" style="left:68px;top:160px;width:61px;height:26px;border:1px solid #b8b8b8;border-bottom:none;border-radius:3px 3px 0 0;background:linear-gradient(#ececec,#dedede)"></div>
<div class="a" style="left:1px;top:158px;width:68px;height:28px;border:1px solid #b0b0b0;border-bottom:none;border-radius:3px 3px 0 0;background:#f9f9f9"></div>
<div class="t" style="left:12px;top:164px">Model</div><div class="t" style="left:80px;top:165px">Tasks</div>
<div class="a" style="left:2px;top:187px;width:434px;height:449px;border:1px solid #b4b4b4;background:#fff"></div><div class="a" style="left:382px;top:188px;width:53px;height:21px;background:#eeeeee"></div>
<div class="hdr" style="left:3px;top:188px;width:379px;height:21px"></div><div class="a" style="left:281px;top:189px;width:1px;height:19px;background:#d0d0d0"></div>
<div class="t" style="left:5px;top:190px">Labels &amp; Attributes</div><div class="t" style="left:284px;top:190px">Description</div>
<div class="t" style="left:6px;top:209px">Application</div>
<svg class="a" style="left:9px;top:233px" width="9" height="5"><path d="M.5 0h8L4.5 4.5z" fill="#555"/></svg><svg class="a" style="left:29px;top:252px" width="9" height="5"><path d="M.5 0h8L4.5 4.5z" fill="#555"/></svg><svg class="a" style="left:51px;top:269px" width="5" height="9"><path d="M0 .5v8l4.5-4z" fill="#555"/></svg><svg class="a" style="left:49px;top:290px" width="9" height="5"><path d="M.5 0h8L4.5 4.5z" fill="#555"/></svg><svg class="a" style="left:71px;top:307px" width="5" height="9"><path d="M0 .5v8l4.5-4z" fill="#555"/></svg>
<svg class="a" style="left:27px;top:227px" width="15" height="16" viewBox="0 0 15 16"><rect x=".5" y=".5" width="13" height="15" rx="1.5" fill="#f4f4f4" stroke="#999"/><path d="M2 7l5-2 5 1.5v6l-5 2-5-1.5z" fill="#3d6db5" stroke="#1e4478" stroke-width=".6"/><circle cx="10" cy="5" r="3.2" fill="#e02020"/></svg>
<svg class="a" style="left:46px;top:246px" width="17" height="16" viewBox="0 0 17 16"><path d="M.5 2.5q0-2 2-2h4l1.5 1.5h7q1.5 0 1.5 1.5v10.5q0 2-2 2h-12q-2 0-2-2z" fill="#727272" stroke="#4a4a4a" stroke-width=".8"/><path d="M.9 2.5q0-1.6 1.6-1.6h4l1.5 1.5h7q1.1 0 1.1 1.1v1.3H.9z" fill="#7a5ed0"/><path d="M.9 4.8h15.2" stroke="#8a8a8a" stroke-width=".8"/></svg>
<svg class="a" style="left:66px;top:265px" width="16" height="16" viewBox="0 0 15 15"><path d="M.8 7.2h14.4v2.6l-3.8 2.4v3.3H4.6v-3.3L.8 9.8z" fill="#f27a7a" stroke="#a83030" stroke-width=".8"/><rect x="2.8" y=".8" width="10.4" height="7.6" fill="#fff" stroke="#8a8a8a" stroke-width=".7"/><path d="M4 2.2l4-1 4 1v5.6l-4 1-4-1z" fill="#3d6db5" stroke="#1e4478" stroke-width=".6"/><path d="M4 2.2l4 1 4-1M8 3.2v5.6" fill="none" stroke="#6f98d8" stroke-width=".6"/></svg>
<svg class="a" style="left:66px;top:284px" width="16" height="16" viewBox="0 0 15 15"><path d="M.8 7.2h14.4v2.6l-3.8 2.4v3.3H4.6v-3.3L.8 9.8z" fill="#f27a7a" stroke="#a83030" stroke-width=".8"/><rect x="2.8" y=".8" width="10.4" height="7.6" fill="#fff" stroke="#8a8a8a" stroke-width=".7"/><path d="M4 2.2l4-1 4 1v5.6l-4 1-4-1z" fill="#3d6db5" stroke="#1e4478" stroke-width=".6"/><path d="M4 2.2l4 1 4-1M8 3.2v5.6" fill="none" stroke="#6f98d8" stroke-width=".6"/></svg>
<svg class="a" style="left:86px;top:304px" width="15" height="15" viewBox="0 0 15 15"><circle cx="5.5" cy="9.5" r="5" fill="#bdbdbd"/><circle cx="10" cy="6" r="4.6" fill="#f4f4f4" stroke="#b0b0b0" stroke-width="1"/></svg>
<div class="t" style="left:48px;top:227px;font-weight:bold;font-size:14.75px">camer_mount_bottom_wip_slice</div>
<div class="t" style="left:68px;top:246px">Exploded Slice</div>
<div class="t" style="left:88px;top:265px">Slice.0</div><div class="t" style="left:88px;top:284px">Slice.1</div>
<div class="t" style="left:108px;top:303px;color:#a8a8a8">Slice</div>
<div class="a" style="left:211px;top:636px;width:18px;height:2px;background-image:radial-gradient(circle,#b8b8b8 .7px,transparent .8px);background-size:3px 2px"></div>
<div class="a" style="left:2px;top:639px;width:435px;height:499px;border:1px solid #b4b4b4;background:#fff"></div>
<div class="a" style="left:4px;top:641px;width:431px;height:496px;border:1px solid #c8c8c8;background:#fff"></div>
<div class="hdr" style="left:5px;top:643px;width:429px;height:21px;border-bottom:1px solid #b8b8b8"></div><div class="a" style="left:104px;top:644px;width:1px;height:19px;background:#d0d0d0"></div>
<div class="t" style="left:7px;top:645px">Property</div><div class="t" style="left:107px;top:645px">Value</div>
<div class="a" style="left:2px;top:1138px;width:59px;height:24px;border:1px solid #b8b8b8;border-top:none;border-radius:0 0 3px 3px;background:linear-gradient(#e2e2e2,#e8e8e8)"></div>
<div class="a" style="left:60px;top:1137px;width:57px;height:28px;border:1px solid #b0b0b0;border-top:none;border-radius:0 0 3px 3px;background:#fdfdfd"></div>
<div class="t" style="left:13px;top:1142px">View</div><div class="t" style="left:72px;top:1143px">Data</div>
<div class="a" style="left:440px;top:646px;width:2px;height:18px;background-image:radial-gradient(circle,#b8b8b8 .7px,transparent .8px);background-size:2px 3px"></div>
 <!-- 3D view -->
 <div id="view" class="a" style="left:444px;top:139px;width:1254px;height:997px;background:linear-gradient(#333366,#a9a9c0);overflow:hidden">
<svg class="a" style="left:-444px;top:-139px" width="1745" height="1416"><polygon points="775.4,753 782.8,734.5 825.8,859.8 818.4,879" fill="#4e4e4e" stroke="#161616" stroke-width="1.6" stroke-linejoin="round" /><polygon points="782.8,734.5 791.7,736.7 795.4,721.1 814,723.3 822.8,739.7 821.3,744.8 814,764.9 808,768.6 833,828 904.4,845 914.8,819.7 935.5,879 825.8,859.8" fill="#727272" stroke="#161616" stroke-width="1.6" stroke-linejoin="round" /><polygon points="795.4,721.1 814,723.3 822.8,739.7 814,742 800,726" fill="#727272" stroke="#161616" stroke-width="1.6" stroke-linejoin="round" /><polygon points="791.7,736.7 795.4,721.1 800,726 801,739" fill="#5a5a5a" stroke="#161616" stroke-width="1.6" stroke-linejoin="round" /><polygon points="819.9,879 825.8,861.2 934,879 919.2,895.4 914.8,910.2 898.5,908.7 874.7,893.9 864.3,902.8 848,899.8 839.1,882" fill="#727272" stroke="#161616" stroke-width="1.6" stroke-linejoin="round" /><polygon points="845,865 853,866 857,883.5 847,895 841,884" fill="#4e4e4e" stroke="#161616" stroke-width="2.2" stroke-linejoin="round" /><ellipse cx="845.8" cy="881" rx="1.6" ry="2" fill="#161616"/><polygon points="825.8,861.2 845,865 839.1,882 819.9,879" fill="#b2b2b2" stroke="#161616" stroke-width="1.6" stroke-linejoin="round" /><polygon points="854,883.5 874.7,893.9 864.3,902.8 848,899.8 845.8,894.6" fill="#b2b2b2" stroke="#161616" stroke-width="1.6" stroke-linejoin="round" /><polygon points="865.8,867.2 895.5,873 885.1,879 879.2,888 874.7,885" fill="#b2b2b2" stroke="#161616" stroke-width="1.6" stroke-linejoin="round" /><polygon points="885.1,879 898.5,873 904.4,890.9 892.5,895.4 888,888" fill="#5a5a5a" stroke="#161616" stroke-width="2" stroke-linejoin="round" /><polygon points="892.5,895.4 904.4,890.9 919.2,893.9 914.8,910.2 898.5,908.7" fill="#b2b2b2" stroke="#161616" stroke-width="1.6" stroke-linejoin="round" /><polygon points="914.8,876.1 934,879 928.1,898.3 919.2,895.4" fill="#b2b2b2" stroke="#161616" stroke-width="1.6" stroke-linejoin="round" /><polygon points="910.5,512.3 936.5,528 942,535 944,543 836.2,827.1 830,827 808,769 814,766" fill="#4e4e4e" stroke="#161616" stroke-width="1.6" stroke-linejoin="round" /><polygon points="992,557 1015,546.5 1016,556 997,557.5" fill="#4e4e4e" stroke="#4e4e4e" stroke-width="0.5" stroke-linejoin="round" /><polygon points="944,543 947.8,546.2 973.8,550.7 988.5,559.8 997.5,556.4 1014.5,554.1 907.3,842 836.2,827.1" fill="#b2b2b2" stroke="#161616" stroke-width="1.6" stroke-linejoin="round" /><polyline points="1015,552 907.3,843 836,828 808,769" fill="none" stroke="#161616" stroke-width="4.2" /><polyline points="946.7,547.3 836.2,827.1" fill="none" stroke="#161616" stroke-width="4.6" /><polyline points="946.7,547.3 836.2,827.1" fill="none" stroke="#f4f4f4" stroke-width="1.1" stroke-dasharray="1 1.4"/><polyline points="808,769 836,828 907,843" fill="none" stroke="#f4f4f4" stroke-width="1.1" stroke-dasharray="1 1.4"/><polygon points="936.5,528 942,535 944,543 947.8,546.2 973.8,550.7" fill="#727272" stroke="#161616" stroke-width="1" stroke-linejoin="round" /><polygon points="1005,556 1013,548 1015,555" fill="#727272" stroke="#161616" stroke-width="1" stroke-linejoin="round" /><polygon points="1086,294 1106.8,272 1130.5,261 1130.5,277 1041.7,510 1029.2,539.4 1015,547.3 993,557.5 988,558" fill="#4e4e4e" stroke="#161616" stroke-width="1.6" stroke-linejoin="round" /><polygon points="1002,245 1086,294 988,558 902,505" fill="#b2b2b2" stroke="#161616" stroke-width="1.6" stroke-linejoin="round" /><polyline points="1002,243 901,505" fill="none" stroke="#161616" stroke-width="3.2" /><polyline points="1087,296 989,558" fill="none" stroke="#161616" stroke-width="4.6" /><polyline points="1087,296 989,558" fill="none" stroke="#f4f4f4" stroke-width="1.1" stroke-dasharray="1 1.4"/><polygon points="1001,238.6 1007.5,236.8 1026.8,247.8 1051.5,235.8 1055.2,227.6 1098.3,254.2 1088.2,261.5 1080,281.7 1098.3,292.7 1092,297 1086,294 1002,245" fill="#727272" stroke="#161616" stroke-width="1.6" stroke-linejoin="round" /><polygon points="1007.5,236.8 1014.8,216.1 1034,226.7 1026.8,247.8" fill="#bcbcbc" stroke="#161616" stroke-width="1.6" stroke-linejoin="round" /><polygon points="1034,226.7 1058.4,214.8 1051.5,235.8 1026.8,247.8" fill="#4e4e4e" stroke="#161616" stroke-width="1.6" stroke-linejoin="round" /><polygon points="1038.7,203.8 1058.4,214.8 1034,226.7 1014.8,216.1" fill="#727272" stroke="#161616" stroke-width="1.8" stroke-linejoin="round" /><ellipse cx="1021.3" cy="232.2" rx="2.2" ry="1.8" fill="#161616"/><polygon points="1080,281.7 1087.3,261.5 1106.5,272.5 1099.2,292.7" fill="#bcbcbc" stroke="#161616" stroke-width="1.6" stroke-linejoin="round" /><polygon points="1106.5,272.5 1130.4,260.6 1123,280.8 1099.2,292.7" fill="#4e4e4e" stroke="#161616" stroke-width="1.6" stroke-linejoin="round" /><polygon points="1112,249.6 1130.4,260.6 1106.5,272.5 1087.3,261.5" fill="#727272" stroke="#161616" stroke-width="1.8" stroke-linejoin="round" /><ellipse cx="1092.5" cy="277" rx="2.2" ry="1.8" fill="#161616"/></svg><svg class="a" style="left:-444px;top:-139px" width="1745" height="1416"><polygon points="1613.6,157.5 1635.8,157.5 1624.7,146.9" fill="#8a8ab0"/><polygon points="1613,266.6 1636.9,266.6 1625.2,277.7" fill="#8a8ab0"/><polygon points="1559,212.6 1570.7,200.9 1570.7,224.2" fill="#8a8ab0"/><polygon points="1690.9,212.6 1679.2,200.9 1679.2,224.2" fill="#8a8ab0"/><path d="M1607.5 156 L1608 165 Q1595 169 1584 177 L1587 181 L1576 181 L1578 169 L1581 172 Q1593 162 1607.5 156z" fill="#8a8ab0"/><path d="M1642.5 156 L1642 165 Q1655 169 1666 177 L1663 181 L1674 181 L1672 169 L1669 172 Q1657 162 1642.5 156z" fill="#8a8ab0"/><path d="M1601 183 Q1604 175 1612 176 L1643 185 L1664 203 Q1667 208 1665 218 L1659 232 L1643 249 Q1638 251 1632 250 L1605 245 L1595 238 Q1593 232 1594 212 Z" fill="#c6c6da" stroke="#a8a8c4" stroke-width="1"/><path d="M1604 189 L1611 178 L1617 190 L1610 198 Z" fill="#9c9cbc"/><path d="M1619 194 L1643 199.3 L1640 208 L1618 205.7 Z" fill="#9a9abc"/><path d="M1643.5 199.5 L1662 203.6 L1664.5 214.2 L1641 209 Z" fill="#9a9abc"/><path d="M1595 214 L1609 218.4 L1605 243.8 L1595 237.5 Z" fill="#9a9abc"/><circle cx="1612.5" cy="199.3" r="7.4" fill="#c4c4da"/><circle cx="1630.5" cy="219" r="5.3" fill="#c4c4da"/><path d="M1596 215 L1625 218" stroke="#3a3a70" stroke-width="1"/><text x="0" y="0" transform="translate(1630.5 224) rotate(188)" font-family="Liberation Sans" font-weight="bold" font-size="12" text-anchor="middle" fill="#111">BOTTOM</text><text x="0" y="0" transform="translate(1634 186) rotate(198)" font-family="Liberation Sans" font-size="7" text-anchor="middle" fill="#222">FRONT</text><path d="M1608.3 254 L1628 255 L1648.5 256.5" stroke="#ff1010" stroke-width="2" fill="none"/><path d="M1648.5 256 L1668.6 224.7" stroke="#10e010" stroke-width="1.6"/><path d="M1648.5 256 L1638 230" stroke="#2020ff" stroke-width="1.6"/><text x="1590.5" y="255" font-family="Liberation Sans" font-size="8" fill="#ff2020">X</text><text x="1681" y="208" font-family="Liberation Sans" font-size="8" fill="#20e020">Y</text><text x="1636" y="222" font-family="Liberation Sans" font-size="8" fill="#a0a0ff">Z</text><path d="M1648.5 256 L1657 253 L1667.6 256 L1667.6 269 L1658 272.4 L1648.5 270 Z" fill="#7a7aa0"/><path d="M1648.5 256 L1658 259 L1667.6 256 M1658 259 V272" stroke="#8c8cb0" fill="none"/><polygon points="1672.9,260.2 1684,260.2 1678.2,266" fill="#3a3a62"/><path d="M1647.9 1086.2 L1626 1083" stroke="#801818" stroke-width="1.6"/><polygon points="1612.9,1080.4 1626.7,1079.3 1625.5,1085.6" fill="#801818"/><path d="M1647.9 1086.7 L1656 1066" stroke="#208020" stroke-width="1.6"/><polygon points="1661,1054.6 1652.5,1064.4 1661,1066.7" fill="#208020"/><path d="M1647.9 1086 L1644 1076" stroke="#202090" stroke-width="1.6"/><polygon points="1641.5,1071.5 1646,1073.5 1643,1079" fill="#202090"/><text x="1615.5" y="1082" font-family="Liberation Sans" font-size="10" fill="#000">X</text><text x="1662" y="1055" font-family="Liberation Sans" font-size="10" fill="#000">Y</text><text x="1645.5" y="1072" font-family="Liberation Sans" font-size="10" fill="#000">Z</text></svg>
 </div>
<div class="a" style="left:444px;top:1136px;width:1254px;height:1px;background:#e4e4e4"></div>
<div class="a" style="left:444px;top:1137px;width:1254px;height:1px;background:#b8b8b8"></div>
<div class="a" style="left:444px;top:1137px;width:140px;height:28px;border:1px solid #b4b4b4;border-top:none;border-radius:0 0 0 4px;background:#e0e0e0"></div>
<div class="a" style="left:583px;top:1137px;width:316px;height:30px;border:1px solid #b4b4b4;border-top:none;border-radius:0 0 4px 4px;background:#fbfbfb"></div>
<svg class="a" style="left:456px;top:1142px" width="17" height="17" viewBox="0 0 17 17"><path d="M1 1h7v3H4v3h3v3H4v5H1z" fill="#d81010"/><g transform="translate(10.5 10.5)"><circle r="4.6" fill="#3a6ab0"/><path d="M0-6.2v2.4M0 3.8v2.4M-6.2 0h2.4M3.8 0h2.4M-4.4-4.4l1.7 1.7M2.7 2.7l1.7 1.7M4.4-4.4l-1.7 1.7M-2.7 2.7l-1.7 1.7" stroke="#3a6ab0" stroke-width="2"/><circle r="1.8" fill="#fff"/></g></svg>
<svg class="a" style="left:595px;top:1144px" width="17" height="17" viewBox="0 0 17 17"><path d="M1 1h7v3H4v3h3v3H4v5H1z" fill="#d81010"/><g transform="translate(10.5 10.5)"><circle r="4.6" fill="#3a6ab0"/><path d="M0-6.2v2.4M0 3.8v2.4M-6.2 0h2.4M3.8 0h2.4M-4.4-4.4l1.7 1.7M2.7 2.7l1.7 1.7M4.4-4.4l-1.7 1.7M-2.7 2.7l-1.7 1.7" stroke="#3a6ab0" stroke-width="2"/><circle r="1.8" fill="#fff"/></g></svg>
<div class="t" style="left:476px;top:1142px">Start page</div>
<div class="t" style="left:615px;top:1144px;font-size:15.3px">camer_mount_bottom_wip_slice : 1*</div>
<svg class="a" style="left:552px;top:1143px" width="16" height="16"><circle cx="8" cy="8" r="8" fill="#d01c2c"/><path d="M5 5l6 6M11 5l-6 6" stroke="#fff" stroke-width="1.8"/></svg>
<svg class="a" style="left:868px;top:1145px" width="16" height="16"><circle cx="8" cy="8" r="8" fill="#d01c2c"/><path d="M5 5l6 6M11 5l-6 6" stroke="#fff" stroke-width="1.8"/></svg>
<div class="a" style="left:842px;top:1169px;width:17px;height:2px;background-image:radial-gradient(circle,#c0c0c0 .7px,transparent .8px);background-size:3px 2px"></div>
 <div class="t" style="left:4px;top:1175px">Python console</div>
<div class="a" style="left:0;top:1193px;width:1698px;height:192px;background:#fff;border:1px solid #b4b4b4;border-right:none"></div>
<div class="mono" style="top:1195px"><span class="op">&gt;&gt;&gt;</span> App<span class="op">.</span>getDocument<span class="op">(</span><span class="st">&quot;camer_mount_bottom_wip_slice&quot;</span><span class="op">)</span><span class="op">.</span>Slice_child1<span class="op">.</span>Placement<span class="op">=</span>App<span class="op">.</span>Placement<span class="op">(</span>App<span class="op">.</span>Vector<span class="op">(</span><span class="nu">0</span><span class="op">,</span><span class="nu">0</span><span class="op">,</span><span class="nu">0</span><span class="op">)</span><span class="op">,</span> App<span class="op">.</span>Rotation<span class="op">(</span>App<span class="op">.</span>Vector<span class="op">(</span><span class="nu">0</span><span class="op">,</span><span class="nu">1</span><span class="op">,</span><span class="nu">0</span><span class="op">)</span><span class="op">,</span><span class="nu">45</span><span class="op">)</span><span class="op">,</span> App<span class="op">.</span>Vector<span class="op">(</span><span class="nu">20</span><span class="op">,</span><span class="nu">0</span><span class="op">,</span><span class="nu">39</span><span class="op">)</span><span class="op">)</span></div>
<div class="mono" style="top:1211px"><span class="op">&gt;&gt;&gt;</span> <span class="cm"># Gui.Selection.clearSelection()</span></div>
<div class="mono" style="top:1227px"><span class="op">&gt;&gt;&gt;</span> <span class="cm"># Gui.Selection.addSelection(&#x27;camer_mount_bottom_wip_slice&#x27;,&#x27;Slice_child0&#x27;)</span></div>
<div class="mono" style="top:1243px"><span class="op">&gt;&gt;&gt;</span> <span class="cm"># Gui.Selection.clearSelection()</span></div>
<div class="mono" style="top:1259px"><span class="op">&gt;&gt;&gt;</span> <span class="cm"># Gui.Selection.addSelection(&#x27;camer_mount_bottom_wip_slice&#x27;,&#x27;Slice_child1&#x27;)</span></div>
<div class="mono" style="top:1275px"><span class="op">&gt;&gt;&gt;</span> Gui<span class="op">.</span>ActiveDocument<span class="op">.</span>setEdit<span class="op">(</span>App<span class="op">.</span>getDocument<span class="op">(</span><span class="st">&#x27;camer_mount_bottom_wip_slice&#x27;</span><span class="op">)</span><span class="op">.</span>getObject<span class="op">(</span><span class="st">&#x27;Slice_child1&#x27;</span><span class="op">)</span><span class="op">)</span></div>
<div class="mono" style="top:1291px"><span class="op">&gt;&gt;&gt;</span> <span class="cm"># Gui.Selection.clearSelection()</span></div>
<div class="mono" style="top:1307px"><span class="op">&gt;&gt;&gt;</span> <span class="cm"># Gui.Selection.addSelection(&#x27;camer_mount_bottom_wip_slice&#x27;,&#x27;Slice_child1&#x27;)</span></div>
<div class="mono" style="top:1323px"><span class="op">&gt;&gt;&gt;</span> App<span class="op">.</span>getDocument<span class="op">(</span><span class="st">&quot;camer_mount_bottom_wip_slice&quot;</span><span class="op">)</span><span class="op">.</span>Slice_child1<span class="op">.</span>Placement<span class="op">=</span>App<span class="op">.</span>Placement<span class="op">(</span>App<span class="op">.</span>Vector<span class="op">(</span><span class="op">-</span><span class="nu">18.89</span><span class="op">,</span><span class="nu">0</span><span class="op">,</span><span class="nu">22.74</span><span class="op">)</span><span class="op">,</span> App<span class="op">.</span>Rotation<span class="op">(</span>App<span class="op">.</span>Vector<span class="op">(</span><span class="nu">0</span><span class="op">,</span><span class="nu">1</span><span class="op">,</span><span class="nu">0</span><span class="op">)</span><span class="op">,</span><span class="nu">45</span><span class="op">)</span><span class="op">,</span> App<span class="op">.</span>Vector<span class="op">(</span><span class="nu">0</span><span class="op">,</span><span class="nu">0</span><span class="op">,</span><span class="nu">0</span><span class="op">)</span><span class="op">)</span></div>
<div class="mono" style="top:1339px"><span class="op">&gt;&gt;&gt;</span> <span class="cm"># Gui.Selection.clearSelection()</span></div>
<div class="mono" style="top:1355px"><span class="op">&gt;&gt;&gt;</span> </div>
<div class="a" style="left:1683px;top:1194px;width:15px;height:190px;background:#fafafa;border-left:1px solid #e0e0e0"></div>
<div class="a" style="left:1684px;top:1208px;width:14px;height:135px;background:#e2e2e2;border:1px solid #d4d4d4"></div>
<svg class="a" style="left:1686px;top:1198px" width="9" height="5"><path d="M0 5h9L4.5 0z" fill="#444"/></svg>
<svg class="a" style="left:1686px;top:1374px" width="9" height="5"><path d="M0 0h9L4.5 5z" fill="#444"/></svg>
<svg class="a" style="left:1671px;top:1178px" width="27" height="12" viewBox="0 0 27 12">
<rect x=".5" y=".5" width="10" height="10" rx="2" fill="none" stroke="#6e6a66"/><rect x="3" y="4.5" width="4" height="4" rx="1" fill="none" stroke="#6e6a66"/><path d="M5 3.5V2.5h3.5v3.5H7.5" fill="none" stroke="#6e6a66"/>
<rect x="14.5" y=".5" width="10.5" height="10" rx="2" fill="none" stroke="#6e6a66"/><path d="M17.2 3.2l5.2 4.8M22.4 3.2L17.2 8" stroke="#666" stroke-width="2.2"/></svg>
<svg class="a" style="left:1421px;top:1393px" width="11" height="15" viewBox="0 0 11 15"><rect x="1" y="1" width="9" height="13" rx="4.5" fill="none" stroke="#222" stroke-width="1.3"/><path d="M5.5 3v3" stroke="#222" stroke-width="1.3"/></svg>
<svg class="a" style="left:1492px;top:1397px" width="6" height="3"><path d="M0 0h6L3 3z" fill="#777"/></svg>
 <div class="t" style="left:2px;top:1392px">Preselected: camer_mount_bottom_wip_slice.Slice_child1.Edge1 (-0.717354 mm, 132.362854 mm, 30.306042 mm)</div>
 <div class="t" style="left:1437px;top:1392px">Blender</div>
 <div class="t" style="left:1509px;top:1392px">402.35 mm x 319.89 mm</div>
</div>
<div class="a" style="left:0;top:1415px;width:1698px;height:1px;background:#0c0c0c"></div>
<svg class="a" style="left:1685px;top:1402px" width="12" height="12" fill="#c4c4c4"><rect x="9" y="0" width="1.3" height="1.3"/><rect x="6" y="3" width="1.3" height="1.3"/><rect x="9" y="3" width="1.3" height="1.3"/><rect x="3" y="6" width="1.3" height="1.3"/><rect x="6" y="6" width="1.3" height="1.3"/><rect x="9" y="6" width="1.3" height="1.3"/><rect x="0" y="9" width="1.3" height="1.3"/><rect x="3" y="9" width="1.3" height="1.3"/><rect x="6" y="9" width="1.3" height="1.3"/><rect x="9" y="9" width="1.3" height="1.3"/></svg>
<div id="rb"></div>
<div id="rdark"></div>
</body></html>
